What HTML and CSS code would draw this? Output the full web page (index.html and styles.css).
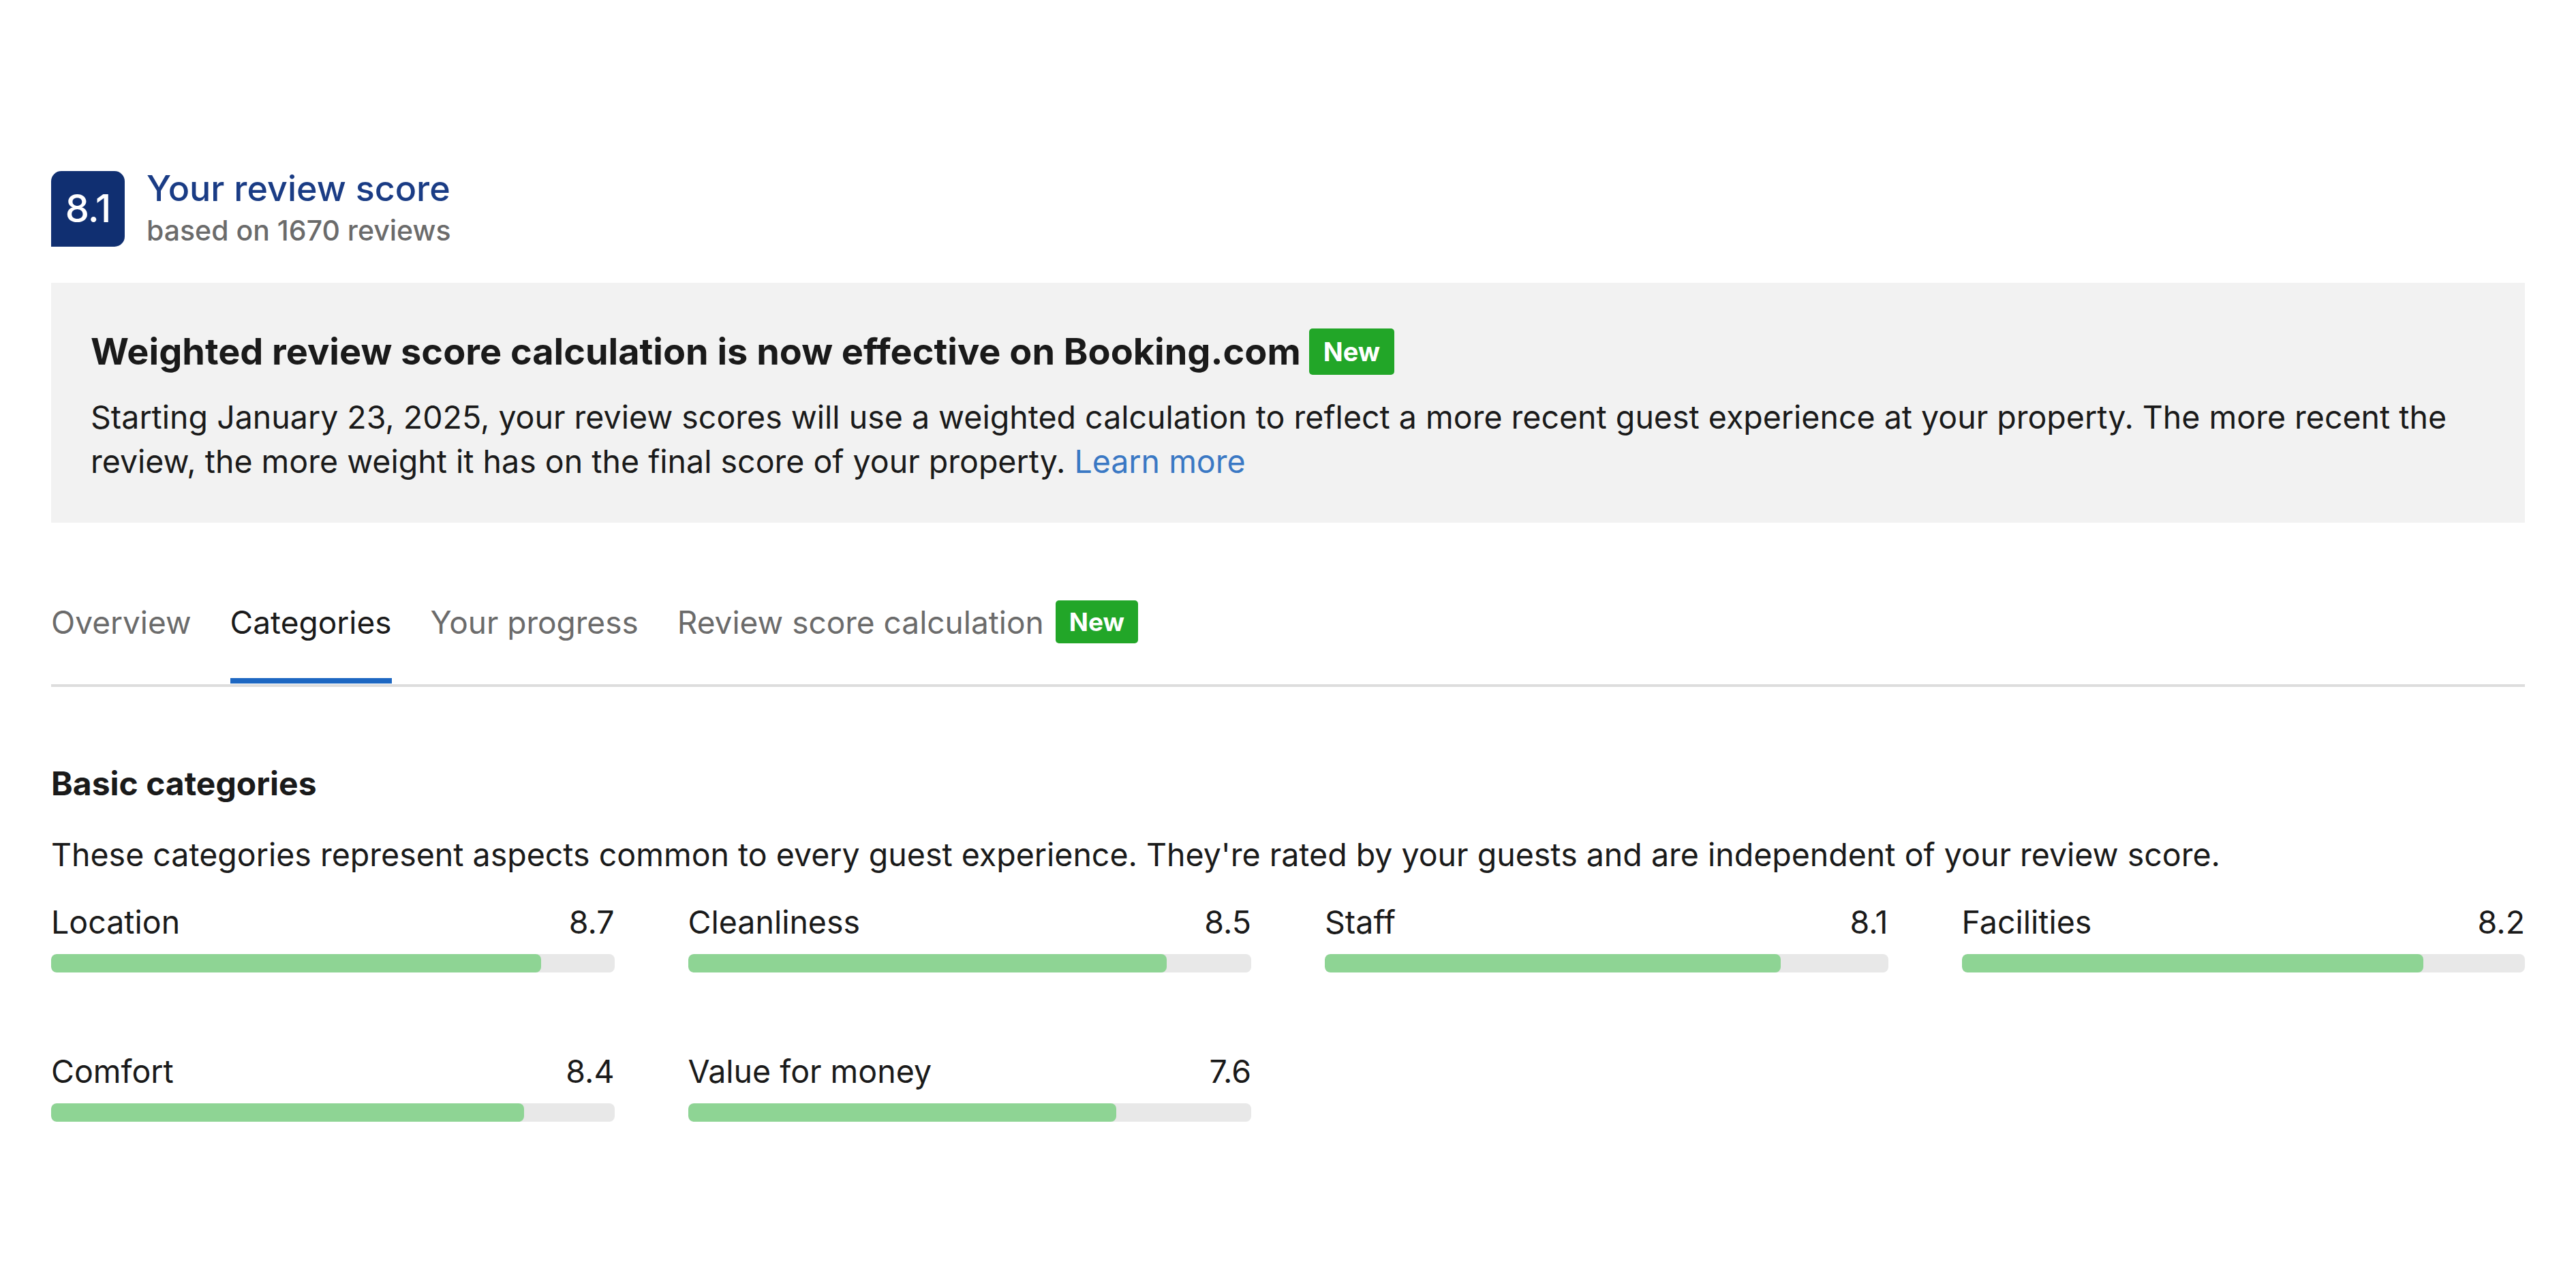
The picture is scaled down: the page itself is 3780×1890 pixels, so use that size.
FILE: index.html
```html
<!DOCTYPE html>
<html lang="en">
<head>
<meta charset="utf-8">
<title>Your review score</title>
<link rel="stylesheet" href="styles.css">
</head>
<body>
<div class="page">
  <header class="score-head">
    <div class="score-badge">8.1</div>
    <div class="score-text">
      <div class="score-title">Your review score</div>
      <div class="score-sub">based on 1670 reviews</div>
    </div>
  </header>

  <section class="notice">
    <h2 class="notice-title">Weighted review score calculation is now effective on Booking.com <span class="tag">New</span></h2>
    <p class="notice-body">Starting January 23, 2025, your review scores will use a weighted calculation to reflect a more recent guest experience at your property. The more recent the review, the more weight it has on the final score of your property. <a class="link" href="#">Learn more</a></p>
  </section>

  <nav class="tabs">
    <a class="tab" href="#">Overview</a>
    <a class="tab active" href="#">Categories</a>
    <a class="tab" href="#">Your progress</a>
    <a class="tab" href="#">Review score calculation <span class="tag">New</span></a>
  </nav>

  <section class="cats">
    <h3 class="cats-title">Basic categories</h3>
    <p class="cats-desc">These categories represent aspects common to every guest experience. They're rated by your guests and are independent of your review score.</p>
    <div class="cat-grid">
      <div class="cat">
        <div class="cat-row"><span>Location</span><span>8.7</span></div>
        <div class="bar"><div class="fill" style="width:87%"></div></div>
      </div>
      <div class="cat">
        <div class="cat-row"><span>Cleanliness</span><span>8.5</span></div>
        <div class="bar"><div class="fill" style="width:85%"></div></div>
      </div>
      <div class="cat">
        <div class="cat-row"><span>Staff</span><span>8.1</span></div>
        <div class="bar"><div class="fill" style="width:81%"></div></div>
      </div>
      <div class="cat">
        <div class="cat-row"><span>Facilities</span><span>8.2</span></div>
        <div class="bar"><div class="fill" style="width:82%"></div></div>
      </div>
      <div class="cat">
        <div class="cat-row"><span>Comfort</span><span>8.4</span></div>
        <div class="bar"><div class="fill" style="width:84%"></div></div>
      </div>
      <div class="cat">
        <div class="cat-row"><span>Value for money</span><span>7.6</span></div>
        <div class="bar"><div class="fill" style="width:76%"></div></div>
      </div>
    </div>
  </section>
</div>
</body>
</html>
```

FILE: styles.css
```css
* { box-sizing: border-box; }

html, body {
  margin: 0;
  background: #ffffff;
}

body {
  font-family: Inter, "Noto Sans", "Liberation Sans", sans-serif;
  color: #1a1a1a;
}

.page {
  padding: 245px 75px 0 75px;
}

/* header */
.score-head {
  display: flex;
  align-items: center;
  gap: 32px;
}

.score-badge {
  width: 108px;
  height: 111px;
  background: #102f71;
  color: #ffffff;
  border-radius: 15px 15px 15px 0;
  display: flex;
  align-items: center;
  justify-content: center;
  font-size: 56px;
  font-weight: 500;
  letter-spacing: -1px;
}

.score-text {
  display: flex;
  flex-direction: column;
}

.score-title {
  font-size: 52px;
  line-height: 64px;
  color: #1a3c85;
  font-weight: 500;
}

.score-sub {
  font-size: 41px;
  line-height: 58px;
  color: #6b6b6b;
  font-weight: 500;
}

/* notice */
.notice {
  margin-top: 48px;
  background: #f2f2f2;
  padding: 67px 58px 57px 58px;
}

.notice-title {
  margin: 0;
  font-size: 54px;
  line-height: 68px;
  font-weight: 700;
  display: flex;
  align-items: center;
  gap: 12px;
}

.tag {
  display: inline-flex;
  align-items: center;
  justify-content: center;
  background: #22a628;
  color: #ffffff;
  font-size: 38px;
  font-weight: 700;
  border-radius: 5px;
  padding: 0 21px;
  height: 68px;
}

.notice-body {
  margin: 30px 0 0 0;
  font-size: 46.5px;
  line-height: 65px;
  color: #1a1a1a;
}

.link {
  color: #3a78c4;
  text-decoration: none;
}

/* tabs */
.tabs {
  margin-top: 114px;
  display: flex;
  gap: 57px;
  border-bottom: 4px solid #dddddd;
}

.tab {
  display: flex;
  align-items: center;
  gap: 17px;
  font-size: 46px;
  line-height: 60px;
  color: #6b6b6b;
  text-decoration: none;
  padding-bottom: 51px;
  border-bottom: 8px solid transparent;
  margin-bottom: 1px;
}

.tab .tag {
  height: 63px;
  font-size: 37px;
  padding: 0 20px;
}

.tab.active {
  color: #1a1a1a;
  border-bottom-color: #1d67c2;
}

/* categories */
.cats {
  margin-top: 112px;
}

.cats-title {
  margin: 0;
  font-size: 48px;
  line-height: 60px;
  font-weight: 700;
}

.cats-desc {
  margin: 44px 0 0 0;
  font-size: 46.5px;
  line-height: 60px;
}

.cat-grid {
  margin-top: 39px;
  display: grid;
  grid-template-columns: repeat(4, 1fr);
  column-gap: 108px;
  row-gap: 115px;
}

.cat-row {
  display: flex;
  justify-content: space-between;
  font-size: 46.5px;
  line-height: 60px;
}

.bar {
  margin-top: 17px;
  height: 27px;
  background: #e8e8e8;
  border-radius: 8px;
  overflow: hidden;
}

.fill {
  height: 100%;
  background: #8ed494;
  border-radius: 8px;
}
```
